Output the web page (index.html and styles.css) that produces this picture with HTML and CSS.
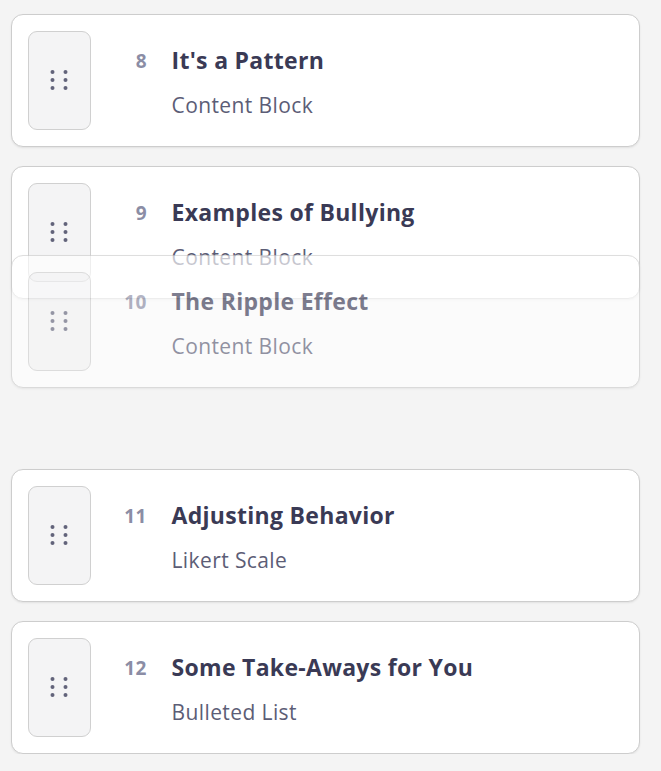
FILE: index.html
```html
<!DOCTYPE html>
<html>
<head>
<meta charset="utf-8">
<link rel="stylesheet" href="styles.css">
</head>
<body>
<div class="list">
  <div class="card">
    <div class="handle"><svg width="18" height="22" viewBox="0 0 18 22"><g fill="#62637a"><circle cx="2.5" cy="3" r="2"/><circle cx="15.5" cy="3" r="2"/><circle cx="2.5" cy="11" r="2"/><circle cx="15.5" cy="11" r="2"/><circle cx="2.5" cy="19" r="2"/><circle cx="15.5" cy="19" r="2"/></g></svg></div>
    <div class="body"><div class="num">8</div><div class="title">It's a Pattern</div><div class="sub">Content Block</div></div>
  </div>
  <div class="card">
    <div class="handle"><svg width="18" height="22" viewBox="0 0 18 22"><g fill="#62637a"><circle cx="2.5" cy="3" r="2"/><circle cx="15.5" cy="3" r="2"/><circle cx="2.5" cy="11" r="2"/><circle cx="15.5" cy="11" r="2"/><circle cx="2.5" cy="19" r="2"/><circle cx="15.5" cy="19" r="2"/></g></svg></div>
    <div class="body"><div class="num">9</div><div class="title">Examples of Bullying</div><div class="sub">Content Block</div></div>
  </div>
  <div class="slot"></div>
  <div class="card">
    <div class="handle"><svg width="18" height="22" viewBox="0 0 18 22"><g fill="#62637a"><circle cx="2.5" cy="3" r="2"/><circle cx="15.5" cy="3" r="2"/><circle cx="2.5" cy="11" r="2"/><circle cx="15.5" cy="11" r="2"/><circle cx="2.5" cy="19" r="2"/><circle cx="15.5" cy="19" r="2"/></g></svg></div>
    <div class="body"><div class="num">11</div><div class="title">Adjusting Behavior</div><div class="sub">Likert Scale</div></div>
  </div>
  <div class="card">
    <div class="handle"><svg width="18" height="22" viewBox="0 0 18 22"><g fill="#62637a"><circle cx="2.5" cy="3" r="2"/><circle cx="15.5" cy="3" r="2"/><circle cx="2.5" cy="11" r="2"/><circle cx="15.5" cy="11" r="2"/><circle cx="2.5" cy="19" r="2"/><circle cx="15.5" cy="19" r="2"/></g></svg></div>
    <div class="body"><div class="num">12</div><div class="title">Some Take-Aways for You</div><div class="sub">Bulleted List</div></div>
  </div>
  <div class="card dragging">
    <div class="handle"><svg width="18" height="22" viewBox="0 0 18 22"><g fill="#62637a"><circle cx="2.5" cy="3" r="2"/><circle cx="15.5" cy="3" r="2"/><circle cx="2.5" cy="11" r="2"/><circle cx="15.5" cy="11" r="2"/><circle cx="2.5" cy="19" r="2"/><circle cx="15.5" cy="19" r="2"/></g></svg></div>
    <div class="body"><div class="num">10</div><div class="title">The Ripple Effect</div><div class="sub">Content Block</div></div>
  </div>
</div>
</body>
</html>
```
FILE: styles.css
```css
html, body {
  margin: 0;
  padding: 0;
  background: #f4f4f4;
}
body {
  font-family: "Open Sans", "Liberation Sans", sans-serif;
}
.list {
  position: relative;
  display: flex;
  flex-direction: column;
  gap: 19px;
  padding: 14px 21px 0 11px;
}
.card {
  box-sizing: border-box;
  height: 133px;
  display: flex;
  align-items: flex-start;
  padding: 15.5px;
  background: #fff;
  border: 1.5px solid #cdcdcd;
  border-radius: 12px;
  box-shadow: 0 1px 2px rgba(0,0,0,0.08);
}
.slot {
  height: 132px;
}
.handle {
  box-sizing: border-box;
  width: 63px;
  height: 99px;
  flex: none;
  display: flex;
  align-items: center;
  justify-content: center;
  background: #f4f4f5;
  border: 1.5px solid #d0d0d0;
  border-radius: 9px;
}
.body {
  display: grid;
  grid-template-columns: 56px auto;
  column-gap: 25px;
  align-items: baseline;
  margin-top: 14px;
}
.num {
  text-align: right;
  font-size: 19px;
  font-weight: 700;
  letter-spacing: 0.6px;
  margin-right: -0.6px;
  position: relative;
  top: -1px;
  color: #8b8da5;
}
.title {
  font-size: 23px;
  line-height: 30px;
  font-weight: 700;
  letter-spacing: 0.3px;
  color: #3a3a55;
}
.sub {
  grid-column: 2;
  margin-top: 17px;
  font-size: 21px;
  line-height: 26px;
  letter-spacing: 0.4px;
  color: #5c5d76;
}
.dragging {
  position: absolute;
  top: 255px;
  left: 11px;
  width: 629px;
  opacity: 0.65;
}
```
